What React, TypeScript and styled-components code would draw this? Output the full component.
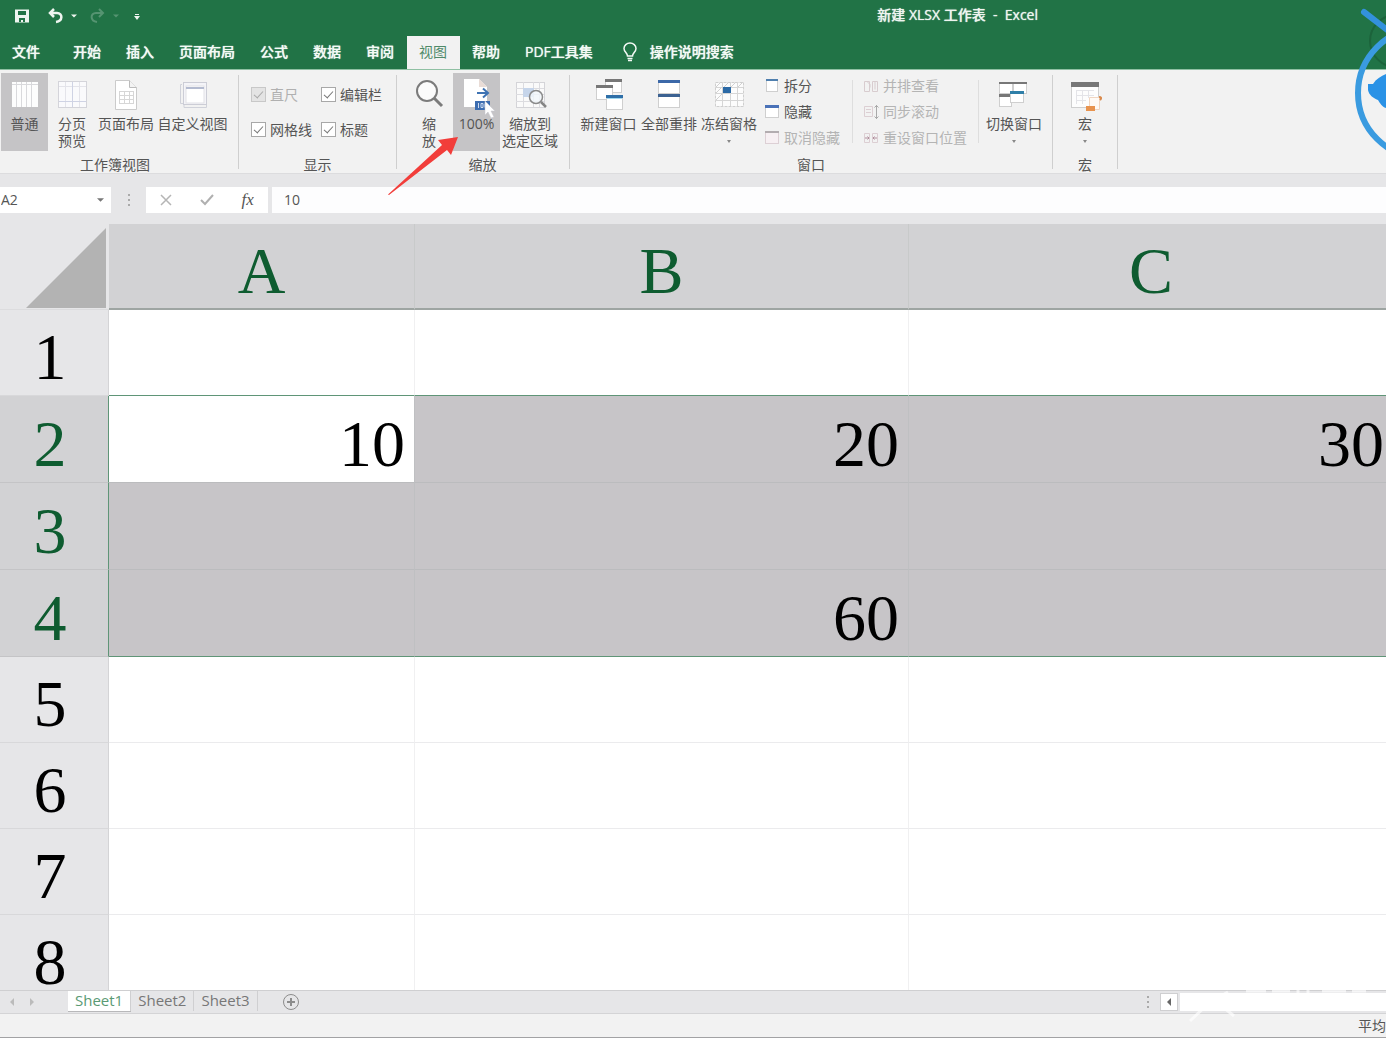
import React from 'react';
import styled, { createGlobalStyle } from 'styled-components';

const Global = createGlobalStyle`
  * { box-sizing: border-box; }
  body { margin: 0; overflow: hidden; background: #e6e6e8; }
  button, input { font: inherit; color: inherit; border: 0; padding: 0; margin: 0; background: none; }
  button { cursor: default; }
`;

const Shell = styled.div`
  position: relative;
  display: flex;
  flex-direction: column;
  height: 100vh;
  overflow: hidden;
  font: 14px/18px "Open Sans", "Noto Sans CJK SC", sans-serif;
  color: #555;
`;

/* ---------- title bar and tabs ---------- */
const TitleBar = styled.header`
  display: flex;
  align-items: center;
  flex: none;
  height: 32px;
  padding-left: 14px;
  background: #217346;
  color: #eef5f0;
`;
const QuickAccess = styled.div`
  display: flex;
  align-items: center;
`;
const QuickButton = styled.button<{ $w: number; $dim?: boolean }>`
  display: flex;
  width: ${p => p.$w}px;
  height: 20px;
  align-items: center;
  opacity: ${p => (p.$dim ? 0.25 : 1)};
`;
const Title = styled.h1`
  margin: 0 348px 0 auto;
  padding-bottom: 2px;
  font-size: 14px;
  line-height: 18px;
  font-weight: 500;
  white-space: pre;
  text-shadow: 0 0 1px currentColor;
`;
const TabBar = styled.nav`
  display: flex;
  flex: none;
  height: 38px;
  padding-top: 4px;
  background: #217346;
  border-bottom: 1px solid #8fc0a3;
  white-space: nowrap;
`;
const Tab = styled.button<{ $active?: boolean; $file?: boolean }>`
  height: 33px;
  margin-right: ${p => (p.$file ? 8 : 0)}px;
  padding: 0 13px 2px 12px;
  font-weight: ${p => (p.$active ? 400 : 500)};
  color: ${p => (p.$active ? '#4f8a69' : '#f4faf6')};
  background: ${p => (p.$active ? '#f2f2f2' : 'transparent')};
  text-shadow: ${p => (p.$active ? 'none' : '0 0 1px currentColor')};
`;
const TellMe = styled(Tab)`
  display: flex;
  align-items: center;
  gap: 12px;
  padding-left: 16px;
`;

/* ---------- ribbon ---------- */
const Ribbon = styled.div`
  display: flex;
  flex: none;
  height: 104px;
  background: #f2f2f2;
  border-bottom: 1px solid #dcdcde;
  white-space: nowrap;
`;
const Group = styled.section<{ $w: number; $gap?: number }>`
  display: flex;
  flex-direction: column;
  flex: none;
  width: ${p => p.$w}px;
  margin-right: ${p => p.$gap ?? 0}px;
  padding-top: 3px;
`;
const GroupBody = styled.div`
  display: flex;
  justify-content: center;
  height: 84px;
`;
const GroupLabel = styled.div`
  text-align: center;
  line-height: 17px;
`;
const Divider = styled.div<{ $short?: boolean }>`
  flex: none;
  width: 1px;
  margin: ${p => (p.$short ? '7px 5px 13px' : '5px 0 4px')};
  background: ${p => (p.$short ? '#dedede' : '#cfcfcf')};
`;
const BigButton = styled.button<{ $w: number; $on?: boolean }>`
  display: flex;
  flex-direction: column;
  align-items: center;
  flex: none;
  width: ${p => p.$w}px;
  height: 78px;
  padding-top: 5px;
  line-height: 17px;
  white-space: pre;
  background: ${p => (p.$on ? '#c5c4c6' : 'transparent')};
  svg { flex: none; margin-bottom: 3px; }
`;
const Caret = styled.span`
  margin-top: 8px;
  border: 2px solid transparent;
  border-top: 3px solid #888;
`;
const SmallColumn = styled.div<{ $w: number }>`
  width: ${p => p.$w}px;
`;
const SmallButton = styled.button`
  display: flex;
  align-items: center;
  gap: 4px;
  height: 26px;
  padding-left: 5px;
  &:disabled { color: #b4b4b4; }
`;
const CheckGrid = styled.div`
  display: grid;
  grid-template-columns: 70px 63px;
  grid-template-rows: 35px 35px;
  align-items: center;
  padding-top: 4px;
`;
const CheckLabel = styled.label<{ $dim?: boolean }>`
  display: flex;
  align-items: center;
  gap: 4px;
  color: ${p => (p.$dim ? '#b0b0b0' : '#555')};
`;
const CheckBox = styled.input`
  appearance: none;
  flex: none;
  display: flex;
  justify-content: center;
  width: 15px;
  height: 15px;
  background: #fff;
  border: 1px solid #a8a8a8;
  &:disabled { background: #e4e4e4; border-color: #c8c8c8; }
  &:checked::before {
    content: "";
    width: 4px;
    height: 8px;
    margin-top: 1px;
    border: solid #777;
    border-width: 0 1px 1px 0;
    transform: rotate(42deg);
  }
  &:disabled::before { border-color: #aaa; }
`;

/* ---------- formula bar ---------- */
const FormulaBar = styled.div`
  display: flex;
  flex: none;
  height: 50px;
  padding: 13px 0 11px;
  background: #e6e6e8;
`;
const NameBox = styled.div`
  display: flex;
  align-items: center;
  width: 111px;
  padding: 0 6px 0 1px;
  background: #fff;
  input { width: 96px; outline: 0; }
`;
const Grip = styled.div`
  display: flex;
  flex-direction: column;
  justify-content: center;
  align-items: center;
  gap: 3px;
  width: 35px;
  i { width: 2px; height: 2px; background: #aaa; }
`;
const FormulaTools = styled.div`
  display: flex;
  width: 122px;
  margin-right: 4px;
  background: #fff;
  button { display: flex; flex: 1; align-items: center; justify-content: center; }
`;
const Fx = styled.button`
  font: italic 17px/18px "Liberation Serif", serif;
`;
const FormulaInput = styled.input`
  flex: 1;
  min-width: 0;
  padding-left: 12px;
  background: #fdfdfe;
  outline: 0;
`;

/* ---------- grid ---------- */
const SheetArea = styled.main`
  flex: 1;
  min-height: 0;
  overflow: hidden;
  background: #fff;
`;
const Sheet = styled.table`
  table-layout: fixed;
  width: 1394px;
  border-collapse: separate;
  border-spacing: 0;
  font: 66px/48px "Liberation Serif", "Noto Serif CJK SC", serif;
  color: #000;
  th, td { padding: 9px 0 0; font-weight: 400; vertical-align: middle; }
`;
const Corner = styled.td`
  height: 86px;
  background: #e6e6e8;
  border-bottom: 1px solid #dcdcde;
  && { padding: 3px 2px 1px 26px; }
  button, svg { display: block; }
`;
const ColHead = styled.th`
  color: #0e5c30;
  background: #d2d2d4;
  border-right: 1px solid #c8caca;
  border-bottom: 2px solid #9ea5a2;
`;
const RowHead = styled.th<{ $sel: boolean; $h: number }>`
  height: ${p => p.$h}px;
  color: ${p => (p.$sel ? '#0e5c30' : '#000')};
  background: ${p => (p.$sel ? '#d2d2d4' : '#e6e6e8')};
  border-right: 1px solid ${p => (p.$sel ? '#5f9577' : '#d4d4d6')};
  border-bottom: 1px solid ${p => (p.$sel ? '#c4c4c6' : '#d8d8da')};
  && { padding-right: 8px; }
`;
const Cell = styled.td<{ $sel: boolean; $active: boolean; $edge: boolean }>`
  text-align: right;
  background: ${p => (p.$active ? '#fff' : p.$sel ? '#c7c5c8' : '#fff')};
  border-right: 1px solid ${p => (p.$sel ? '#bfc0c2' : '#f0f0f1')};
  border-bottom: 1px solid ${p => (p.$edge ? '#5f9577' : p.$sel ? '#bbbcbe' : '#ebebed')};
  && { padding-right: 9px; }
`;

/* ---------- bottom bars ---------- */
const SheetTabs = styled.footer`
  display: flex;
  flex: none;
  height: 24px;
  background: #e6e6e8;
  border-top: 1px solid #cfcfd1;
  border-bottom: 1px solid #d4d4d6;
`;
const SheetNav = styled.div`
  display: flex;
  width: 68px;
  padding-left: 8px;
  gap: 12px;
  align-items: center;
  button { display: flex; }
`;
const SheetTab = styled.button<{ $active?: boolean }>`
  height: 20px;
  padding: 0 7px 2px;
  font-size: 15px;
  line-height: 18px;
  color: ${p => (p.$active ? '#5a9a74' : '#777')};
  background: ${p => (p.$active ? '#fff' : 'transparent')};
  border-right: 1px solid #cfcfd1;
  box-shadow: ${p => (p.$active ? '0 1px 0 #b8b8ba' : 'none')};
`;
const AddSheet = styled.button`
  display: flex;
  align-items: center;
  margin: 0 auto 0 24px;
`;
const HScroll = styled.div`
  display: flex;
  gap: 2px;
  width: 226px;
  padding: 2px 0;
`;
const ScrollGrip = styled(Grip)`
  width: 24px;
`;
const ScrollButton = styled.button`
  display: flex;
  align-items: center;
  justify-content: center;
  width: 18px;
  background: #fff;
  border: 1px solid #cfcfd1;
`;
const ScrollThumb = styled.div`
  flex: 1;
  background: #fff;
`;
const StatusBar = styled.div`
  display: flex;
  flex: none;
  align-items: center;
  justify-content: flex-end;
  height: 24px;
  background: #f2f2f2;
  border-bottom: 1px solid #a2a2a4;
`;

/* ---------- things lying over the window ---------- */
const Pointer = styled.svg`
  position: absolute;
  left: 388px;
  top: 136px;
  pointer-events: none;
`;
const Cursor = styled.svg`
  position: absolute;
  left: 484px;
  top: 101px;
  pointer-events: none;
`;
const Mascot = styled.svg`
  position: absolute;
  right: 0;
  top: 0;
  pointer-events: none;
`;
const Watermark = styled.svg`
  position: absolute;
  right: 10px;
  bottom: 14px;
  pointer-events: none;
`;

const Down = ({ c = '#777', s = 7 }: { c?: string; s?: number }) => (
  <svg width={s} height="4" viewBox="0 0 8 4"><path d="M0 0h8L4 4z" fill={c} /></svg>
);

const Ico = ({ children }: { children: React.ReactNode }) => (
  <svg width="34" height="34" viewBox="0 0 34 34" fill="none">{children}</svg>
);

/** A small window: outline with a coloured title strip. */
const Win = ({ x, y, w, h, c, b = 3 }: { x: number; y: number; w: number; h: number; c: string; b?: number }) => (
  <g>
    <rect x={x + 0.5} y={y + 0.5} width={w - 1} height={h - 1} fill="#fff" stroke="#cfcfcf" />
    <rect x={x} y={y} width={w} height={b} fill={c} />
  </g>
);

const icons = {
  normal: (
    <Ico>
      <rect x="4" y="4" width="26" height="25" fill="#fdfdfd" />
      <path d="M8.500 4v25M13.500 4v25M18.500 4v25M23.500 4v25M4 6.500h26" stroke="#d9d9dc" />
    </Ico>
  ),
  breaks: (
    <Ico>
      <rect x="3.500" y="3.500" width="28" height="26" fill="#fafafc" stroke="#d4d4da" />
      <path d="M10.500 4v25M24.500 4v25M4 8.500h27" stroke="#e4e4ea" />
      <path d="M17.500 4v25M4 23.500h27" stroke="#cfd3e4" />
    </Ico>
  ),
  page: (
    <Ico>
      <path d="M6.500 2.500h14l7 7v22h-21z" fill="#fff" stroke="#cbcbcb" />
      <path d="M20.500 2.500v7h7" fill="#f3f3f3" stroke="#bbb" />
      <path d="M10 13.500h15M10 17.500h15M10 21.500h15M10 25.500h15M10.500 13v13M15.500 13v13M20.500 13v13M24.500 13v13" stroke="#d6d6d6" />
    </Ico>
  ),
  custom: (
    <Ico>
      <path d="M6 6.500H4.500V25.500H8V29.500H30.500V26" stroke="#d0d2da" />
      <rect x="7.500" y="4.500" width="23" height="22" fill="#f4f4f8" stroke="#cccdd6" />
      <rect x="10" y="8" width="18" height="17" fill="#fff" stroke="#e1e1e6" />
      <rect x="10" y="9" width="18" height="2" fill="#b4bbd0" />
    </Ico>
  ),
  zoom: (
    <Ico>
      <circle cx="15" cy="13" r="10" fill="#fbfbfb" stroke="#7b7b7b" strokeWidth="2" />
      <path d="M22 20l8 8" stroke="#7b7b7b" strokeWidth="3" />
    </Ico>
  ),
  hundred: (
    <Ico>
      <path d="M4 1h15l8 8v20H4z" fill="#fff" />
      <path d="M19 1v8h8z" fill="#e9dcd6" />
      <path d="M17 15h10M23 10.500l5 4.500-5 4.500" stroke="#3f73b3" strokeWidth="2" />
      <rect x="15" y="23" width="15" height="9" fill="#3d6db0" />
      <path d="M18.500 25v5M21 25.500h2v4h-2zM25 25.500h2v4h-2z" stroke="#cfdcf0" />
    </Ico>
  ),
  zoomSel: (
    <Ico>
      <rect x="3.500" y="4.500" width="28" height="25" fill="#fafafa" stroke="#d4d4d8" />
      <path d="M3 10.500h28M3 16.500h28M3 23.500h28M10.500 4v25M20.500 4v25M26.500 4v25" stroke="#dcdce0" />
      <rect x="10" y="10" width="11" height="9" fill="#c6d5ea" />
      <circle cx="23" cy="19" r="6.500" fill="#f3f7fb" fillOpacity=".8" stroke="#8a8a8a" strokeWidth="1.500" />
      <path d="M28 24l5 5" stroke="#858585" strokeWidth="2.500" />
    </Ico>
  ),
  newWin: (
    <Ico>
      <Win x={13} y={1} w={17} h={14} c="#777" />
      <Win x={4} y={7} w={17} h={15} c="#777" />
      <Win x={14} y={17} w={17} h={15} c="#2f6fa8" />
      <path d="M15 20.500h15" stroke="#9fd8f0" />
    </Ico>
  ),
  arrange: (
    <Ico>
      <Win x={6} y={2} w={22} h={14} c="#3c68a8" />
      <Win x={6} y={16} w={22} h={14} c="#3c6292" />
    </Ico>
  ),
  freeze: (
    <Ico>
      <rect x="3.500" y="4.500" width="28" height="24" fill="#fcfcfc" stroke="#cfcfcf" strokeDasharray="3 1" />
      <path d="M3 9.500h28M3 15.500h28M3 22.500h28M10.500 4v24M18.500 4v24M25.500 4v24" stroke="#d6d6d6" />
      <path d="M4 9l5-5M12 9l5-5M19 9l5-5M26 9l5-5M4 15l5-5M4 22l6-6" stroke="#d0d0d0" />
      <rect x="11" y="9" width="8" height="6" fill="#2c6aa6" />
    </Ico>
  ),
  switchWin: (
    <Ico>
      <Win x={2} y={4} w={14} h={12} c="#777" b={2} />
      <Win x={16} y={4} w={14} h={12} c="#777" b={2} />
      <Win x={2} y={16} w={13} h={13} c="#777" />
      <Win x={13} y={13} w={14} h={12} c="#2f7fa8" />
    </Ico>
  ),
  macro: (
    <Ico>
      <rect x="3.500" y="4.500" width="27" height="25" fill="#fdfdfd" stroke="#cfcfcf" />
      <path d="M8 12.500h18M8 17.500h18M8 22.500h10M8.500 12v14M14.500 12v14M20.500 12v8" stroke="#e4e4e8" />
      <rect x="3" y="4" width="28" height="5" fill="#777" />
      <path d="M21.500 19.500h10v12h-10z" fill="#fffaf5" stroke="#f0d6c2" />
      <path d="M18 28h9v5h-9z" fill="#e8934e" />
      <path d="M31 19c2 0 3 1 1 3" stroke="#d98a4c" strokeWidth="2" />
    </Ico>
  ),
};

const SmallIco = ({ kind }: { kind: string }) => (
  <svg width="16" height="16" viewBox="0 0 16 16" fill="none">
    {kind === 'split' && <Win x={2} y={1} w={12} h={13} c="#4f7fae" b={2} />}
    {kind === 'hide' && <Win x={1} y={1} w={14} h={13} c="#4a72b8" />}
    {kind === 'unhide' && (
      <><rect x="1.500" y="2.500" width="13" height="11" fill="#f7f0f3" stroke="#ddd0d5" /><rect x="1" y="1" width="14" height="2" fill="#b3adb0" /></>
    )}
    {kind === 'side' && (
      <path d="M1.500 3.500h5v10h-5zM9.500 3.500h5v10h-5zM4 3.500l3 3v3M12 3.500v8" stroke="#d8cccf" />
    )}
    {kind === 'sync' && (
      <><path d="M1.500 2.500h8v10h-8zM3 5.500h5M3 8.500h5" stroke="#dccfd3" /><path d="M13.500 1v14M11.500 3.500l2-2 2 2M11.500 12.500l2 2 2-2" stroke="#a9a9a9" /></>
    )}
    {kind === 'reset' && (
      <><path d="M1.500 3.500h5v9h-5zM9.500 3.500h5v9h-5z" stroke="#dccfd3" /><path d="M2 8h4M14 8h-4M4.500 6.500L6 8l-1.500 1.500M11.500 6.500L10 8l1.500 1.500" stroke="#b08e9c" /></>
    )}
  </svg>
);

const Big = ({ icon, label, w, on, menu }: { icon: keyof typeof icons; label: string; w: number; on?: boolean; menu?: boolean }) => (
  <BigButton $w={w} $on={on}>
    {icons[icon]}
    {label}
    {menu && <Caret />}
  </BigButton>
);

const Small = ({ kind, label, disabled }: { kind: string; label: string; disabled?: boolean }) => (
  <SmallButton disabled={disabled}><SmallIco kind={kind} />{label}</SmallButton>
);

const Check = ({ label, disabled }: { label: string; disabled?: boolean }) => (
  <CheckLabel $dim={disabled}>
    <CheckBox type="checkbox" defaultChecked disabled={disabled} />{label}
  </CheckLabel>
);

const tabs = ['文件', '开始', '插入', '页面布局', '公式', '数据', '审阅', '视图', '帮助', 'PDF工具集'];

const rows = [
  { h: 86, cells: ['', '', ''] },
  { h: 87, cells: ['10', '20', '30'] },
  { h: 87, cells: ['', '', ''] },
  { h: 87, cells: ['', '60', ''] },
  { h: 86, cells: ['', '', ''] },
  { h: 86, cells: ['', '', ''] },
  { h: 86, cells: ['', '', ''] },
  { h: 86, cells: ['', '', ''] },
];

export default function App() {
  return (
    <Shell>
      <Global />
      <TitleBar>
        <QuickAccess>
          <QuickButton $w={34} aria-label="保存">
            <svg width="16" height="16" viewBox="0 0 16 16"><path d="M1 1.500h14v13H1zM4 3v4h8V3zM5 10v4h2v-2h2v2h2v-4z" fill="currentColor" fillRule="evenodd" /></svg>
          </QuickButton>
          <QuickButton $w={23} aria-label="撤消">
            <svg width="16" height="16" viewBox="0 0 16 16" fill="none" stroke="currentColor" strokeWidth="2.500"><path d="M6 1L2 5l4 4M2 5h7c6 0 6 8-1 9" /></svg>
          </QuickButton>
          <QuickButton $w={18} aria-label="撤消列表"><Down c="currentColor" s={6} /></QuickButton>
          <QuickButton $w={24} $dim aria-label="恢复">
            <svg width="16" height="16" viewBox="0 0 16 16" fill="none" stroke="currentColor" strokeWidth="2"><path d="M10 1l4 4-4 4M14 5H7c-6 0-6 8 1 9" /></svg>
          </QuickButton>
          <QuickButton $w={21} $dim aria-label="恢复列表"><Down c="currentColor" s={6} /></QuickButton>
          <QuickButton $w={8} aria-label="自定义快速访问工具栏">
            <svg width="6" height="7" viewBox="0 0 6 7"><path d="M1 1h4v1H1zM0 3h6L3 7z" fill="currentColor" /></svg>
          </QuickButton>
        </QuickAccess>
        <Title>新建 XLSX 工作表  -  Excel</Title>
      </TitleBar>

      <TabBar>
        {tabs.map(t => <Tab key={t} $active={t === '视图'} $file={t === '文件'}>{t}</Tab>)}
        <TellMe>
          <svg width="16" height="20" viewBox="0 0 16 20" fill="none" stroke="currentColor" strokeWidth="1.500">
            <path d="M5.500 14c0-3-3.500-4-3.500-7.500a6 5.500 0 0 1 12 0c0 3.500-3.500 4.500-3.500 7.500zM5.500 16.500h5M6 18.500h4" />
          </svg>
          操作说明搜索
        </TellMe>
      </TabBar>

      <Ribbon>
        <Group $w={230} $gap={8}>
          <GroupBody>
            <Big icon="normal" label="普通" w={47} on />
            <Big icon="breaks" label={'分页\n预览'} w={48} />
            <Big icon="page" label="页面布局" w={60} />
            <Big icon="custom" label="自定义视图" w={73} />
          </GroupBody>
          <GroupLabel>工作簿视图</GroupLabel>
        </Group>
        <Divider />
        <Group $w={157}>
          <GroupBody>
            <CheckGrid>
              <Check label="直尺" disabled />
              <Check label="编辑栏" />
              <Check label="网格线" />
              <Check label="标题" />
            </CheckGrid>
          </GroupBody>
          <GroupLabel>显示</GroupLabel>
        </Group>
        <Divider />
        <Group $w={171} $gap={1}>
          <GroupBody>
            <Big icon="zoom" label={'缩\n放'} w={48} />
            <Big icon="hundred" label="100%" w={47} on />
            <Big icon="zoomSel" label={'缩放到\n选定区域'} w={60} />
          </GroupBody>
          <GroupLabel>缩放</GroupLabel>
        </Group>
        <Divider />
        <Group $w={482}>
          <GroupBody>
            <Big icon="newWin" label="新建窗口" w={61} />
            <Big icon="arrange" label="全部重排" w={60} />
            <Big icon="freeze" label="冻结窗格" w={60} menu />
            <SmallColumn $w={88}>
              <Small kind="split" label="拆分" />
              <Small kind="hide" label="隐藏" />
              <Small kind="unhide" label="取消隐藏" disabled />
            </SmallColumn>
            <Divider $short />
            <SmallColumn $w={115}>
              <Small kind="side" label="并排查看" disabled />
              <Small kind="sync" label="同步滚动" disabled />
              <Small kind="reset" label="重设窗口位置" disabled />
            </SmallColumn>
            <Divider $short />
            <Big icon="switchWin" label="切换窗口" w={60} menu />
          </GroupBody>
          <GroupLabel>窗口</GroupLabel>
        </Group>
        <Divider />
        <Group $w={64}>
          <GroupBody><Big icon="macro" label="宏" w={47} menu /></GroupBody>
          <GroupLabel>宏</GroupLabel>
        </Group>
        <Divider />
      </Ribbon>

      <FormulaBar>
        <NameBox>
          <input aria-label="名称框" defaultValue="A2" />
          <Down />
        </NameBox>
        <Grip><i /><i /><i /></Grip>
        <FormulaTools>
          <button aria-label="取消"><svg width="12" height="12" viewBox="0 0 12 12" stroke="#b5b5b5" strokeWidth="1.500"><path d="M1 1l10 10M11 1L1 11" /></svg></button>
          <button aria-label="输入"><svg width="14" height="12" viewBox="0 0 14 12" fill="none" stroke="#b0b0b0" strokeWidth="2"><path d="M1 6l4 4 8-9" /></svg></button>
          <Fx>fx</Fx>
        </FormulaTools>
        <FormulaInput aria-label="编辑栏" defaultValue="10" />
      </FormulaBar>

      <SheetArea>
        <Sheet>
          <colgroup>
            <col width="109" /><col width="306" /><col width="494" /><col width="485" />
          </colgroup>
          <thead>
            <tr>
              <Corner>
                <button aria-label="全选">
                  <svg width="80" height="80" viewBox="0 0 80 80"><path d="M80 0v80H0z" fill="#b3b3b3" /></svg>
                </button>
              </Corner>
              {['A', 'B', 'C'].map(c => <ColHead key={c} scope="col">{c}</ColHead>)}
            </tr>
          </thead>
          <tbody>
            {rows.map((r, i) => {
              const sel = i >= 1 && i <= 3;
              return (
                <tr key={i}>
                  <RowHead scope="row" $sel={sel} $h={r.h}>{i + 1}</RowHead>
                  {r.cells.map((v, j) => (
                    <Cell key={j} $sel={sel} $active={i === 1 && j === 0} $edge={i === 0 || i === 3}>{v}</Cell>
                  ))}
                </tr>
              );
            })}
          </tbody>
        </Sheet>
      </SheetArea>

      <SheetTabs>
        <SheetNav>
          <button aria-label="上一张"><svg width="8" height="8" viewBox="0 0 8 8"><path d="M6 0v8L2 4z" fill="#bbb" /></svg></button>
          <button aria-label="下一张"><svg width="8" height="8" viewBox="0 0 8 8"><path d="M2 0v8l4-4z" fill="#bbb" /></svg></button>
        </SheetNav>
        <SheetTab $active>Sheet1</SheetTab>
        <SheetTab>Sheet2</SheetTab>
        <SheetTab>Sheet3</SheetTab>
        <AddSheet aria-label="新工作表">
          <svg width="18" height="18" viewBox="0 0 18 18" fill="none" stroke="#8c8c8c"><circle cx="9" cy="9" r="7.500" /><path d="M9 5v8M5 9h8" strokeWidth="2" /></svg>
        </AddSheet>
        <ScrollGrip><i /><i /><i /></ScrollGrip>
        <HScroll>
          <ScrollButton aria-label="向左滚动"><svg width="6" height="8" viewBox="0 0 6 8"><path d="M5 0v8L1 4z" fill="#666" /></svg></ScrollButton>
          <ScrollThumb />
        </HScroll>
      </SheetTabs>
      <StatusBar>平均</StatusBar>

      <Pointer width="70" height="60" viewBox="0 0 70 60">
        <path d="M0 58.500L54 9l-4-5 20-3-7 18-4-5L1 59z" fill="#f23d3a" />
      </Pointer>
      <Cursor width="12" height="18" viewBox="0 0 12 18">
        <path d="M1 0v14l3-3 3 6 3-1-3-6h4z" fill="#fff" stroke="#c4c4cc" strokeWidth=".5" />
      </Cursor>
      <Mascot width="36" height="160" viewBox="1350 0 36 160" fill="none">
        <circle cx="1396" cy="41" r="26" stroke="#1c633b" strokeWidth="2" />
        <path d="M1364 12l26 20" stroke="#3391dc" strokeWidth="6" strokeLinecap="round" />
        <circle cx="1423" cy="93" r="65" stroke="#3a9be0" strokeWidth="6" />
        <path d="M1368 84h5c3-5 8-8 13-10v34c-4-1-6-5-8-8-5-2-9-5-10-10z" fill="#2a92e6" />
      </Mascot>
      <Watermark width="190" height="36" viewBox="0 0 190 36" fill="none" stroke="#fff" strokeOpacity=".65" strokeWidth="3">
        <path d="M4 33L24 14 42 4M24 8l24 20M60 3h20M86 3h18M112 1v6M122 1v6M136 3h24M166 3h14" />
      </Watermark>
    </Shell>
  );
}
